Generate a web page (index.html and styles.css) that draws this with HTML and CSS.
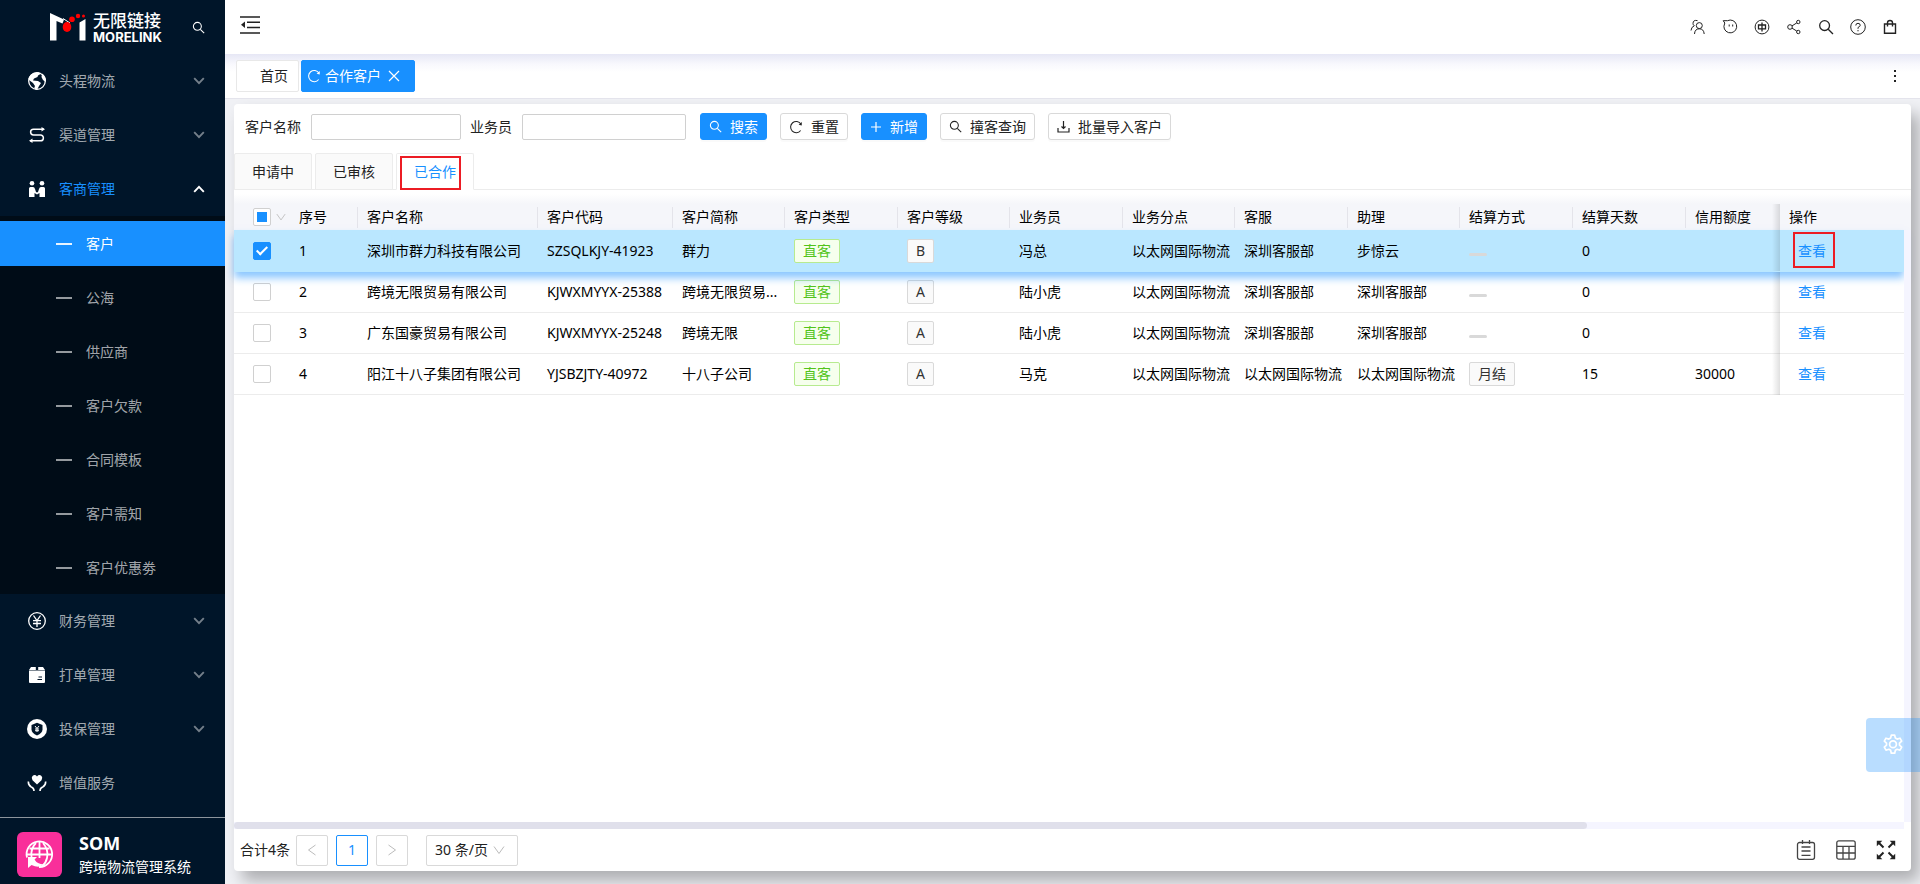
FILE: index.html
```html
<!DOCTYPE html>
<html lang="zh-CN">
<head>
<meta charset="utf-8">
<meta name="viewport" content="width=device-width, initial-scale=1">
<title>合作客户 - SOM 跨境物流管理系统</title>
<link rel="stylesheet" href="styles.css">
</head>
<body>
<svg class="sprite" aria-hidden="true">
  <symbol id="i-search" viewBox="0 0 16 16"><g fill="none" stroke="currentColor" stroke-width="1.3"><circle cx="6.6" cy="6.6" r="4.9"/><path d="M10.2 10.2 15 15"/></g></symbol>
  <symbol id="i-down" viewBox="0 0 12 12"><path d="M1.2 3.2 6 8.2l4.800-5" fill="none" stroke="currentColor" stroke-width="1.900"/></symbol>
  <symbol id="i-thin-down" viewBox="0 0 12 12"><path d="M1 2.500 6 9.500l5-7" fill="none" stroke="currentColor" stroke-width="1"/></symbol>
  <symbol id="i-reload" viewBox="0 0 16 16"><path d="M13.300 12A6.400 6.400 0 1 1 13.600 4.600" fill="none" stroke="currentColor" stroke-width="1.200"/><path d="M14.600 2.400v3.800l-3.600-.9z" fill="currentColor"/></symbol>
</svg>
<div class="app">
  <aside class="sidebar">
    <div class="brand">
      <svg class="brand-mark" viewBox="0 0 36 28"><path d="M0 0 14 6.500 12.500 10.500 6.500 8v19.500H0zM29.500 9.500 35.500 6v21.500h-6z" fill="#fff"/><path d="M13 5.500 20 10" stroke="#fff" stroke-width="1"/><ellipse cx="17" cy="14" rx="4.300" ry="5" fill="#f00"/><circle cx="22" cy="6.200" r="2.800" fill="#f00"/><circle cx="28" cy="3" r="2.200" fill="#f00"/><circle cx="33.500" cy="3" r="1.500" fill="#f00"/></svg>
      <div class="brand-text"><strong>无限链接</strong><span>MORELINK</span></div>
      <button class="bare brand-search" aria-label="搜索菜单"><svg width="13" height="13"><use href="#i-search"/></svg></button>
    </div>
    <nav class="menu">
      <a class="item" href="#"><svg class="mi" viewBox="0 0 20 20"><circle cx="10" cy="10" r="8.300" fill="none" stroke="#fff" stroke-width="1.300"/><path d="M1.500 8Q3 2 9 1.500L12 1.200 13.500 3 11 4.500 10.500 6 7 7.500 6 9.500 11 10l3 2-2 3-2 4Q6 18 8 15L6 12 2 9zM15 2.500Q20 6 18.600 11L16 9 14.500 6z" fill="#fff"/></svg><span>头程物流</span><svg class="arrow"><use href="#i-down"/></svg></a>
      <a class="item" href="#"><svg class="mi" viewBox="0 0 20 20"><path d="M17 4.200H6.500a2.900 2.900 0 0 0 0 5.800h7a2.900 2.900 0 0 1 0 5.800H3" fill="none" stroke="#fff" stroke-width="1.500"/><path d="M14.500 2v4.400L18 4.200zM5.500 13.500v4.600L2 15.800z" fill="#fff"/></svg><span>渠道管理</span><svg class="arrow"><use href="#i-down"/></svg></a>
      <a class="item open" href="#"><svg class="mi" viewBox="0 0 20 20" fill="#fff"><circle cx="5" cy="4.200" r="2.300"/><circle cx="15" cy="4.200" r="2.300"/><path d="M2 9.500Q2 8 3.500 8H6Q7.500 8 8 10l1 3 1 .5 1-.5 1-3q.5-2 2-2h2.500Q18 8 18 9.500V18h-5.500v-4L10 15.500 7.500 14v4H2z"/></svg><span>客商管理</span><svg class="arrow up"><use href="#i-down"/></svg></a>
      <div class="submenu">
        <a class="sub active" href="#"><i></i>客户</a>
        <a class="sub" href="#"><i></i>公海</a>
        <a class="sub" href="#"><i></i>供应商</a>
        <a class="sub" href="#"><i></i>客户欠款</a>
        <a class="sub" href="#"><i></i>合同模板</a>
        <a class="sub" href="#"><i></i>客户需知</a>
        <a class="sub" href="#"><i></i>客户优惠劵</a>
      </div>
      <a class="item" href="#"><svg class="mi" viewBox="0 0 20 20" fill="none" stroke="#fff" stroke-width="1.300"><circle cx="10" cy="10" r="8.300"/><path d="m6.500 4.500 3.500 5 3.500-5M10 9.500V16M6 9.700h8M6 12.500h8"/></svg><span>财务管理</span><svg class="arrow"><use href="#i-down"/></svg></a>
      <a class="item" href="#"><svg class="mi" viewBox="0 0 20 20"><path d="M4 2h4.800v3H2zM11.200 2H16l2 3h-6.800zM2 5.500h16V17q0 1-1 1H3q-1 0-1-1z" fill="#fff"/><path d="M11.500 12H15M10.500 14.500H15" stroke="#001529" stroke-width="1.100"/></svg><span>打单管理</span><svg class="arrow"><use href="#i-down"/></svg></a>
      <a class="item" href="#"><svg class="mi" viewBox="0 0 20 20"><circle cx="10" cy="10" r="10" fill="#fff"/><path d="M10 3.800 15.500 6v4.500q0 3.500-5.500 6-5.500-2.500-5.500-6V6z" fill="#001529"/><path d="m8 7 2 2.500L12 7M10 9.500V13M8 10h4M8 11.700h4" fill="none" stroke="#fff" stroke-width="1"/></svg><span>投保管理</span><svg class="arrow"><use href="#i-down"/></svg></a>
      <a class="item" href="#"><svg class="mi" viewBox="0 0 20 20"><path d="M10 11.500 5.500 7.300Q4 4.500 5.500 3 8 1 10 3.500 12 1 14.500 3q1.500 1.500 0 4.300z" fill="#fff"/><path d="M1.300 8.500q0 4 3 5.500 2.700 1 2.700 4M18.700 8.500q0 4-3 5.500-2.700 1-2.700 4" fill="none" stroke="#fff" stroke-width="1.600"/></svg><span>增值服务</span></a>
    </nav>
    <div class="product">
      <svg class="product-icon" viewBox="0 0 45 45"><rect width="45" height="45" rx="6" fill="#f92f9a"/><g fill="none" stroke="#fff" stroke-width="1.800"><path d="M10 25.500A12.800 12.800 0 1 1 22 35"/><path d="M19 11Q13.500 16 14.500 25M22.500 10v16M26 11q6 7 4 15-1 5-5 8.500M12.500 16.500h20M10 22.500h25.500"/></g><path d="M11 25h9l-2.500 2.500Q20 32 27 32.500q-5 4-12.500.5L11 36z" fill="#fff"/></svg>
      <div><strong>SOM</strong><span>跨境物流管理系统</span></div>
    </div>
  </aside>

  <div class="main">
    <header class="topbar">
      <button class="bare" aria-label="收起菜单"><svg width="20" height="20" viewBox="0 0 20 20"><path d="M0 2h20M7 7.300h13M7 12.500h13M0 18h20" stroke="#222" stroke-width="1.600"/><path d="M5 6.500v6.500L1 9.700z" fill="#222"/></svg></button>
      <div class="tools">
        <button class="bare" aria-label="用户"><svg viewBox="0 0 16 16"><g><circle cx="9.300" cy="6.600" r="3"/><path d="M4.500 15q.3-5.200 4.800-5.200T14.200 15M7.500 1.600Q3 .6 3 4.500q0 1.500 1.300 2.300Q1.200 8 1 11.500"/></g></svg></button>
        <button class="bare" aria-label="消息"><svg viewBox="0 0 16 16"><path d="M1.200 1.700h4.300a6.400 6.400 0 1 1-3.600 5.600L2.800 4z"/><path d="M7.200 5.500v2M10.700 5.500v2"/></svg></button>
        <button class="bare" aria-label="语言"><svg viewBox="0 0 16 16"><circle cx="8" cy="8" r="6.900"/><path d="M4.500 6h7v3.800h-7zM8 3.500v9" stroke-width="1.300"/></svg></button>
        <button class="bare" aria-label="分享"><svg viewBox="0 0 16 16"><circle cx="4" cy="8" r="2.300"/><circle cx="12.300" cy="3" r="1.700"/><circle cx="12.300" cy="13" r="1.700"/><path d="m6 6.900 4.800-3M6 9.100l4.800 3"/></svg></button>
        <button class="bare" aria-label="搜索"><svg><use href="#i-search"/></svg></button>
        <button class="bare" aria-label="帮助"><svg viewBox="0 0 16 16"><circle cx="8" cy="8" r="7.300"/><path d="M5.800 6.500q0-2.200 2.200-2.200t2.200 2Q10.200 7.500 8 8.500v1.300M8 11v1.300"/></svg></button>
        <button class="bare" aria-label="商城"><svg viewBox="0 0 16 16"><path d="M2.500 5h11v9.300h-11zM5.500 7.500V3.800Q5.500 1.500 8 1.500t2.500 2.300v3.700" stroke-width="1.400"/></svg></button>
      </div>
    </header>

    <div class="pagetabs">
      <a class="ptab" href="#">首页</a>
      <a class="ptab current" href="#"><svg width="14" height="14"><use href="#i-reload"/></svg>合作客户<svg width="12" height="12" viewBox="0 0 12 12"><path d="M1 1l10 10M11 1 1 11" stroke="#fff" stroke-width="1.200"/></svg></a>
      <button class="bare more" aria-label="更多"><svg width="4" height="12" viewBox="0 0 4 12" fill="#222"><path d="M1 0h2v2H1zM1 5h2v2H1zM1 10h2v2H1z"/></svg></button>
    </div>

    <main class="workspace">
      <section class="card">
        <form class="filters">
          <label for="cname">客户名称</label><input class="w-name" id="cname" type="text">
          <label for="sales">业务员</label><input class="w-sales" id="sales" type="text">
          <button type="button" class="btn primary"><svg width="13" height="13"><use href="#i-search"/></svg>搜索</button>
          <button type="button" class="btn"><svg width="14" height="14"><use href="#i-reload"/></svg>重置</button>
          <button type="button" class="btn primary"><svg width="12" height="12" viewBox="0 0 12 12"><path d="M6 1v10M1 6h10" stroke="currentColor" stroke-width="1.200"/></svg>新增</button>
          <button type="button" class="btn"><svg width="13" height="13"><use href="#i-search"/></svg>撞客查询</button>
          <button type="button" class="btn"><svg width="13" height="13" viewBox="0 0 13 13"><path d="M1 8v4h11V8M6.500 1v7M4.500 6.500l2 2 2-2" fill="none" stroke="currentColor" stroke-width="1.200"/></svg>批量导入客户</button>
        </form>

        <div class="tabs" role="tablist">
          <button role="tab" class="tab">申请中</button>
          <button role="tab" class="tab">已审核</button>
          <button role="tab" class="tab on" aria-selected="true">已合作</button>
        </div>

        <div class="grid">
          <table>
            <colgroup><col class="c-check"><col class="c-seq"><col class="c-name"><col class="c-code"><col class="c-a"><col class="c-b"><col class="c-a"><col class="c-b"><col class="c-a"><col class="c-b"><col class="c-a"><col class="c-b"><col class="c-b"><col class="c-credit"><col class="c-op"></colgroup>
            <thead><tr>
              <th><span class="pick"><input type="checkbox" class="partial" aria-label="全选"><svg width="10" height="10"><use href="#i-thin-down"/></svg></span></th>
              <th>序号</th><th>客户名称</th><th>客户代码</th><th>客户简称</th><th>客户类型</th><th>客户等级</th><th>业务员</th><th>业务分点</th><th>客服</th><th>助理</th><th>结算方式</th><th>结算天数</th><th>信用额度</th><th>操作</th>
            </tr></thead>
            <tbody>
              <tr class="selected"><td><span class="pick"><input type="checkbox" checked aria-label="选择 1"></span></td><td>1</td><td>深圳市群力科技有限公司</td><td>SZSQLKJY-41923</td><td>群力</td><td><span class="tag green">直客</span></td><td><span class="tag">B</span></td><td>冯总</td><td>以太网国际物流</td><td>深圳客服部</td><td>步惊云</td><td><span class="none"></span></td><td>0</td><td></td><td><a class="marked" href="#">查看</a></td></tr>
              <tr><td><span class="pick"><input type="checkbox" aria-label="选择 2"></span></td><td>2</td><td>跨境无限贸易有限公司</td><td>KJWXMYYX-25388</td><td>跨境无限贸易...</td><td><span class="tag green">直客</span></td><td><span class="tag">A</span></td><td>陆小虎</td><td>以太网国际物流</td><td>深圳客服部</td><td>深圳客服部</td><td><span class="none"></span></td><td>0</td><td></td><td><a href="#">查看</a></td></tr>
              <tr><td><span class="pick"><input type="checkbox" aria-label="选择 3"></span></td><td>3</td><td>广东国豪贸易有限公司</td><td>KJWXMYYX-25248</td><td>跨境无限</td><td><span class="tag green">直客</span></td><td><span class="tag">A</span></td><td>陆小虎</td><td>以太网国际物流</td><td>深圳客服部</td><td>深圳客服部</td><td><span class="none"></span></td><td>0</td><td></td><td><a href="#">查看</a></td></tr>
              <tr><td><span class="pick"><input type="checkbox" aria-label="选择 4"></span></td><td>4</td><td>阳江十八子集团有限公司</td><td>YJSBZJTY-40972</td><td>十八子公司</td><td><span class="tag green">直客</span></td><td><span class="tag">A</span></td><td>马克</td><td>以太网国际物流</td><td>以太网国际物流</td><td>以太网国际物流</td><td><span class="tag">月结</span></td><td>15</td><td>30000</td><td><a href="#">查看</a></td></tr>
            </tbody>
          </table>
          <div class="vtrack"></div>
        </div>
        <div class="htrack"><div class="thumb"></div></div>

        <footer class="pager">
          <span>合计4条</span>
          <button class="pg" aria-label="上一页"><svg class="prev" width="12" height="12"><use href="#i-thin-down"/></svg></button>
          <button class="pg cur">1</button>
          <button class="pg" aria-label="下一页"><svg class="next" width="12" height="12"><use href="#i-thin-down"/></svg></button>
          <div class="size"><select aria-label="每页条数"><option>30 条/页</option></select><svg width="12" height="12"><use href="#i-thin-down"/></svg></div>
          <div class="views">
            <button class="bare" aria-label="列表"><svg width="20" height="20" viewBox="0 0 20 20"><g fill="none" stroke="#444" stroke-width="1.300"><rect x="1.500" y="2.500" width="17" height="16.800" rx="2"/><path d="M6.500 0v4M13.500 0v4M5.500 7h9M5.500 11h9M5.500 15.300h9"/></g></svg></button>
            <button class="bare" aria-label="表格"><svg width="20" height="20" viewBox="0 0 20 20"><g fill="none" stroke="#444" stroke-width="1.300"><rect x=".8" y=".8" width="18.400" height="18.400" rx="2"/><path d="M1 6.300h18M1 13h18M7 6.300V19M13 6.300V19"/></g></svg></button>
            <button class="bare" aria-label="全屏"><svg width="20" height="20" viewBox="0 0 20 20"><path d="M2 2l5.500 5.500M18 2l-5.500 5.500M2 18l5.500-5.500M18 18l-5.500-5.500" stroke="#222" stroke-width="2"/><path d="M.8.8h5.500L.8 6.300zM19.200.8v5.500L13.700.8zM.8 19.200v-5.500l5.500 5.500zM19.200 19.200h-5.500l5.500-5.500z" fill="#222"/></svg></button>
          </div>
        </footer>
      </section>
    </main>
  </div>
</div>
<button class="gear" aria-label="设置"><svg width="22" height="22" viewBox="0 0 22 22"><path d="M9.300 1.200h3.400l.7 2.900 1.700 1 2.900-.9 1.700 3-2.200 2v2l2.200 2-1.700 3-2.900-.9-1.700 1-.7 2.900H9.300l-.7-2.900-1.700-1-2.900.9-1.700-3 2.200-2v-2l-2.200-2 1.700-3 2.900.9 1.700-1z" fill="none" stroke="#fff" stroke-width="1.700" stroke-linejoin="round"/><circle cx="11" cy="10.300" r="3.400" fill="none" stroke="#fff" stroke-width="1.700"/></svg></button>
</body>
</html>
```
FILE: styles.css
```css
*, *::before, *::after { box-sizing: border-box; }

body {
  margin: 0;
  font: 14px/20px "Noto Sans", "Noto Sans CJK SC", sans-serif;
  color: #222;
}

a { color: #1890ff; text-decoration: none; }
button, input, select { font: inherit; color: inherit; }
.sprite { position: absolute; width: 0; height: 0; }
.bare { display: flex; padding: 0; border: 0; background: none; cursor: pointer; }

.app { display: flex; height: 100vh; }

/* Sidebar */
.sidebar {
  display: flex;
  flex-direction: column;
  flex: 0 0 225px;
  background: #001529;
  color: #fff;
}
.brand { display: flex; align-items: center; height: 54px; padding-left: 50px; }
.brand-mark { width: 36px; height: 28px; margin-right: 7px; }
.brand-text { display: flex; flex-direction: column; }
.brand-text strong { font-size: 17px; line-height: 20px; font-weight: 500; }
.brand-text span { font: bold 13px/12px Inter, "Liberation Sans", sans-serif; }
.brand-search { margin-left: auto; padding-right: 20px; }

.menu { flex: 1; min-height: 0; overflow: hidden; }
.item {
  display: flex;
  align-items: center;
  height: 54px;
  padding: 0 20px 0 27px;
  color: rgba(255, 255, 255, .65);
}
.mi { width: 20px; height: 20px; margin-right: 12px; }
.arrow { width: 12px; height: 12px; margin-left: auto; opacity: .7; }
.arrow.up { transform: rotate(180deg); color: #fff; opacity: 1; }
.item.open { color: #1890ff; }

.submenu { background: #000c17; }
.sub {
  display: flex;
  align-items: center;
  height: 54px;
  padding-left: 56px;
  border-top: 5px solid #000c17;
  border-bottom: 4px solid #000c17;
  color: rgba(255, 255, 255, .65);
}
.sub i { width: 16px; height: 2px; margin-right: 14px; background: currentColor; opacity: .9; }
.sub.active { background: #1890ff; color: #fff; }

.product {
  display: flex;
  align-items: center;
  gap: 17px;
  height: 67px;
  padding: 6px 0 0 17px;
  border-top: 1px solid #8c949c;
}
.product-icon { width: 45px; height: 45px; }
.product div { display: flex; flex-direction: column; gap: 4px; padding-top: 2px; }
.product strong { font-size: 18px; line-height: 20px; }

/* Top */
.main { display: flex; flex-direction: column; flex: 1; min-width: 0; background: #f0f1f5; }
.topbar {
  display: flex;
  align-items: center;
  justify-content: space-between;
  height: 54px;
  padding: 0 22px 0 15px;
  background: #fff;
}
.tools { display: flex; gap: 16px; }
.tools svg { width: 16px; height: 16px; fill: none; stroke: #222; stroke-width: 1px; color: #222; }
.topbar > .bare { padding-bottom: 4px; }

.pagetabs {
  display: flex;
  align-items: center;
  gap: 2px;
  height: 45px;
  padding: 0 23px 0 11px;
  border-bottom: 1px solid #e4e4ec;
  background: linear-gradient(#e6e7f5, #f8f8fd 10px, #fff 18px);
}
.ptab {
  display: flex;
  align-items: center;
  gap: 4px;
  height: 32px;
  padding: 0 10px 0 23px;
  border: 1px solid #e8e8e8;
  border-radius: 2px;
  background: #fff;
  color: #222;
}
.ptab.current { padding: 0 14px 0 5px; border-color: #1890ff; background: #1890ff; color: #fff; }
.ptab.current svg:last-child { margin-left: 3px; }
.more { margin-left: auto; }

/* Card */
.workspace { display: flex; flex: 1; min-height: 0; padding: 5px 9px 13px; overflow: hidden; }
.card {
  display: flex;
  flex-direction: column;
  flex: 1;
  min-width: 0;
  border-radius: 4px;
  background: #fff;
  box-shadow: 8px 10px 16px rgba(0, 0, 0, .28);
}

.filters { display: flex; align-items: center; padding: 9px 11px 13px; }
.filters label { margin-right: 10px; }
.filters input {
  height: 26px;
  margin-right: 9px;
  padding: 0 8px;
  border: 1px solid #d0d0d0;
  border-radius: 2px;
}
.w-name { width: 150px; }
.filters .w-sales { width: 164px; margin-right: 14px; }
.btn {
  display: flex;
  align-items: center;
  gap: 8px;
  height: 27px;
  margin-right: 13px;
  padding: 0 8px;
  border: 1px solid #d9d9d9;
  border-radius: 3px;
  background: #fff;
  box-shadow: 0 2px 0 rgba(0, 0, 0, .02);
}
.btn.primary { border-color: #1890ff; background: #1890ff; color: #fff; }

.tabs { display: flex; gap: 3px; height: 37px; border-bottom: 1px solid #ececec; }
.tab {
  height: 37px;
  padding: 0 17px;
  border: 1px solid #ececec;
  border-radius: 2px 2px 0 0;
  background: #fafafa;
}
.tab.on {
  position: relative;
  border-bottom-color: #fff;
  background: #fff;
  color: #1890ff;
}
.tab.on::after, .marked::after {
  content: "";
  position: absolute;
  border: 2px solid #ec1c24;
}
.tab.on::after { inset: 2px 12px -1px 3px; }

/* Table */
.grid {
  position: relative;
  flex: 1;
  min-height: 0;
  margin-top: 4px;
  padding: 10px 7px 0 0;
  background: linear-gradient(#fff, #f5f6fa 10px, #f5f6fa 36px, #fff 36px);
}
table { width: 100%; border-spacing: 0; table-layout: fixed; color: #000; }
.c-check { width: 56px; }
.c-seq { width: 68px; }
.c-name { width: 180px; }
.c-code { width: 135px; }
.c-a { width: 112px; }
.c-b { width: 113px; }
.c-credit { width: 94px; }
.c-op { width: 124px; }

th, td {
  padding: 0 0 0 9px;
  text-align: left;
  white-space: nowrap;
  overflow: hidden;
  text-overflow: ellipsis;
}
td { padding-right: 4px; }
th {
  height: 26px;
  font-weight: 400;
  background: linear-gradient(#e4e4ea, #e4e4ea) right 3px / 1px 21px no-repeat;
}
th:first-child, th:nth-last-child(-n+2) { background: none; }
td { height: 41px; border-bottom: 1px solid #ececec; }
td:first-child, th:first-child { padding: 0 0 0 19px; }
th:last-child, td:last-child {
  position: relative;
  overflow: visible;
}
th:last-child::before, td:last-child::before {
  content: "";
  position: absolute;
  top: 0;
  bottom: -1px;
  left: -8px;
  width: 8px;
  background: linear-gradient(90deg, transparent, rgba(0, 0, 0, .12));
}
.selected td:last-child::before { bottom: 0; }
td:last-child { padding-left: 18px; }
.selected { position: relative; box-shadow: 0 6px 8px rgba(24, 144, 255, .5); }
.selected td { height: 42px; border-color: #bae7ff; background: #bae7ff; }
.marked { position: relative; }
.marked::after { inset: -9px -9px -8px -5px; }

.pick { display: flex; align-items: center; gap: 5px; color: #bbb; }
input[type="checkbox"] {
  display: grid;
  place-items: center;
  flex: none;
  appearance: none;
  width: 18px;
  height: 18px;
  margin: 0;
  border: 1px solid #d0d0d0;
  border-radius: 2px;
  background: #fff;
}
.partial::after { content: ""; width: 10px; height: 10px; background: #1890ff; }
input[type="checkbox"]:checked { border-color: #1890ff; background: #1890ff; }
input[type="checkbox"]:checked::after {
  content: "";
  width: 6px;
  height: 11px;
  margin-bottom: 3px;
  border: solid #fff;
  border-width: 0 2px 2px 0;
  transform: rotate(45deg);
}

.tag {
  display: inline-block;
  padding: 1px 8px;
  border: 1px solid #d9d9d9;
  border-radius: 2px;
  background: #fafafa;
  color: #333;
  vertical-align: middle;
}
.tag.green { border-color: #b7eb8f; background: #f6ffed; color: #52c41a; }
.none { display: inline-block; width: 18px; height: 3px; border-radius: 2px; background: #d9d9d9; }

.vtrack { position: absolute; top: 36px; right: 0; bottom: 0; width: 7px; background: #f5f5ff; }
.htrack { height: 7px; margin-right: 7px; background: #f5f5ff; }
.thumb { width: 81%; height: 7px; border-radius: 4px; background: #e0e0eb; }

/* Footer */
.pager { display: flex; align-items: center; height: 42px; padding: 0 15px 0 6px; }
.pager > span { margin-right: 6px; }
.pg {
  display: grid;
  place-items: center;
  width: 32px;
  height: 31px;
  margin-right: 8px;
  padding: 0;
  border: 1px solid #d9d9d9;
  border-radius: 2px;
  background: #fff;
  color: #bbb;
}
.pg.cur { border-color: #1890ff; color: #1890ff; }
.prev { transform: rotate(90deg); }
.next { transform: rotate(-90deg); }
.size {
  display: grid;
  grid-template-columns: 1fr 12px;
  align-items: center;
  width: 92px;
  height: 31px;
  margin-left: 10px;
  padding: 0 12px 0 8px;
  border: 1px solid #d9d9d9;
  border-radius: 2px;
  color: #bbb;
}
.size select { appearance: none; padding: 0; border: 0; background: none; color: #222; }
.views { display: flex; gap: 20px; margin-left: auto; }

.gear {
  position: fixed;
  right: 0;
  bottom: 112px;
  display: flex;
  align-items: center;
  width: 54px;
  height: 54px;
  padding: 0 0 0 16px;
  border: 0;
  border-radius: 4px 0 0 4px;
  background: rgba(24, 144, 255, .3);
}
```
